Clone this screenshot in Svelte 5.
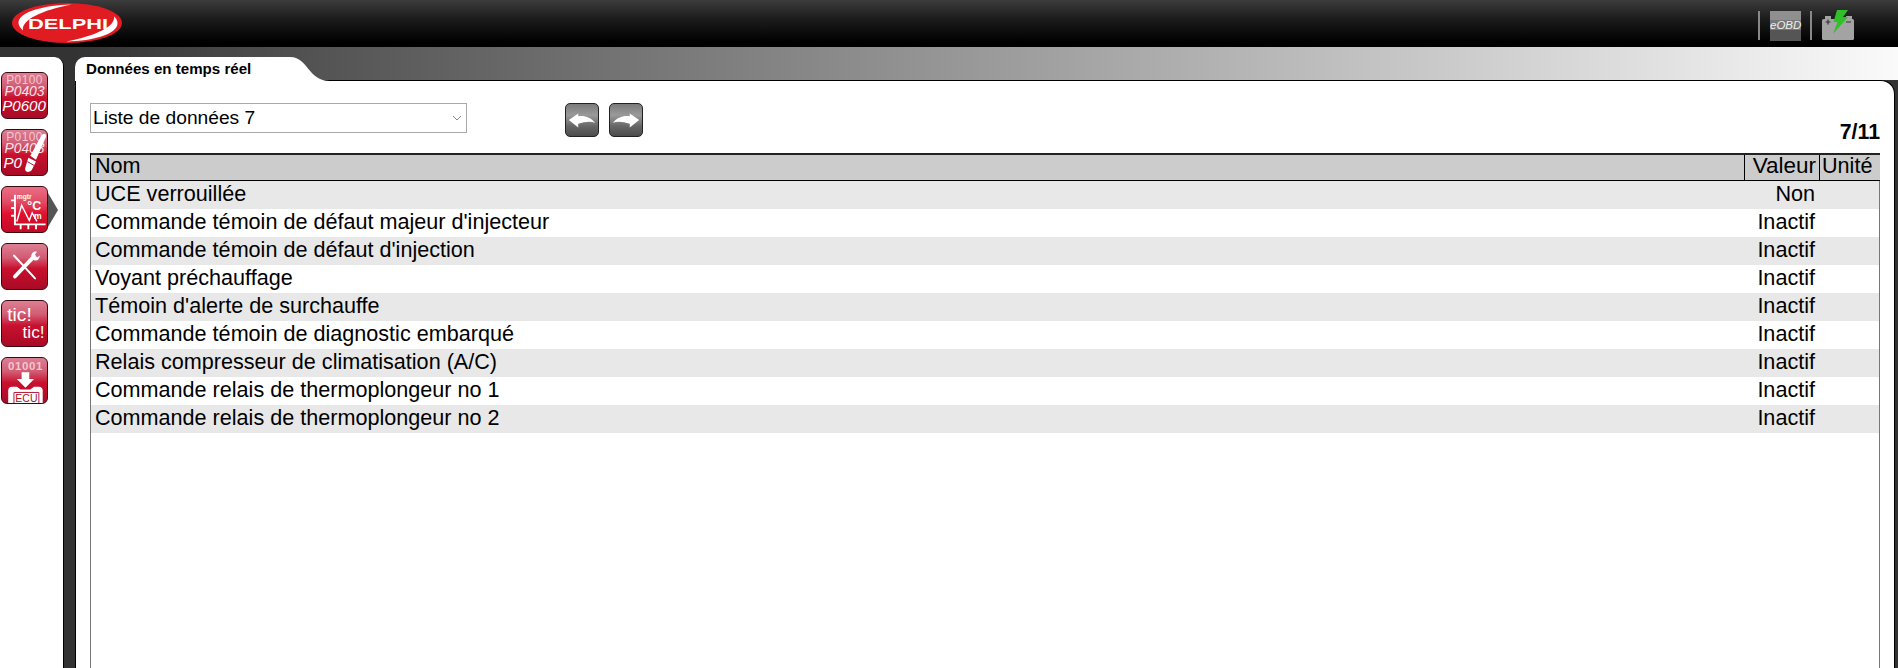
<script>
  const rows = [
    ["UCE verrouillée", "Non"],
    ["Commande témoin de défaut majeur d'injecteur", "Inactif"],
    ["Commande témoin de défaut d'injection", "Inactif"],
    ["Voyant préchauffage", "Inactif"],
    ["Témoin d'alerte de surchauffe", "Inactif"],
    ["Commande témoin de diagnostic embarqué", "Inactif"],
    ["Relais compresseur de climatisation (A/C)", "Inactif"],
    ["Commande relais de thermoplongeur no 1", "Inactif"],
    ["Commande relais de thermoplongeur no 2", "Inactif"]
  ];
</script>

<div class="page">
  <header class="topbar">
    <svg class="logo" viewBox="0 0 110 40" width="110" height="40">
      <ellipse cx="55" cy="20" rx="55" ry="20" fill="#e01b22" />
      <path d="M60 1.500C32 2 7 9 6.500 19.500C6.500 22 8 25 11 27.500C9 17 30 7 60 1.500Z" fill="#fff" />
      <path d="M54 38.500C82 38 105 31 105.500 20.500C105.500 17.500 104 15 102 13.500C104 23 84 33 54 38.500Z" fill="#fff" />
      <text x="56" y="26" text-anchor="middle" textLength="80" lengthAdjust="spacingAndGlyphs" class="logotext">DELPHI</text>
    </svg>
    <div class="status">
      <span class="sep"></span>
      <span class="eobd">eOBD</span>
      <span class="sep"></span>
      <svg class="battery" viewBox="0 0 33 30" width="33" height="30">
        <rect x="0" y="9" width="32" height="21" rx="1.500" fill="#a3a3a3" />
        <rect x="3" y="6" width="6" height="3" fill="#a3a3a3" />
        <rect x="24" y="6" width="6" height="3" fill="#a3a3a3" />
        <path d="M3.500 12H8.500M6 9.500V14.500M24 12H29" stroke="#333" stroke-width="1.200" />
        <path d="M15 0H26L21 7H26L11 24L15.500 12H11.500Z" fill="#2fc02a" />
      </svg>
    </div>
  </header>

  <div class="body">
    <nav class="sidebar">
      <button class="tool" aria-label="Codes défaut">
        <svg viewBox="0 0 46 47">
          <text x="23" y="11.500" class="c1">P0100</text>
          <text x="23" y="24.500" class="c2">P0403</text>
          <text x="22.500" y="40" class="c3">P0600</text>
        </svg>
      </button>
      <button class="tool" aria-label="Effacer les codes">
        <svg viewBox="0 0 46 47">
          <text x="23" y="11.500" class="c1">P0100</text>
          <text x="23" y="24.500" class="c2">P0403</text>
          <text x="1" y="40" class="c3 start">P0</text>
          <path d="M29 27L40 7C42 3 46 3 45.500 7L35 31Z" fill="#fff" />
          <path d="M27 29L35 33L31 41C29 45 22 45 24 39Z" fill="#fff" />
          <path d="M26 33L33 37" stroke="#b01030" stroke-width="1" />
        </svg>
      </button>
      <div class="current">
        <button class="tool strong" aria-label="Données en temps réel">
          <svg viewBox="0 0 46 47">
            <path d="M13 8V39H45M9 14H13M9 22H13M9 30H13M19 39V44M27 39V44M35 39V44" stroke="#fff" stroke-width="2" fill="none" />
            <path d="M15 36L20 19L28 35L31 27L36 36" stroke="#fff" stroke-width="1.500" fill="none" />
            <text x="26" y="24" class="deg">°C</text>
            <text x="33" y="33" class="deg small">m</text>
            <text x="15" y="13" class="deg tiny">mgtr</text>
          </svg>
        </button>
        <svg class="pointer" viewBox="0 0 10 34" width="10" height="34"><path d="M0 0L10 17L0 34Z" fill="#555" /></svg>
      </div>
      <button class="tool" aria-label="Outils">
        <svg viewBox="0 0 46 47">
          <path d="M12 12L34 36" stroke="#fff" stroke-width="2" stroke-linecap="round" />
          <path d="M32 14L13 34" stroke="#fff" stroke-width="4" stroke-linecap="round" />
          <path d="M30 13C30 9 33 7 36 8L34 11L36 14L39 12C39 16 36 18 33 17Z" fill="#fff" />
        </svg>
      </button>
      <button class="tool" aria-label="Tic tic">
        <svg viewBox="0 0 46 47">
          <text x="5" y="21" class="tic">tic!</text>
          <text x="44" y="39" class="tic end">tic!</text>
        </svg>
      </button>
      <button class="tool" aria-label="Flash ECU">
        <svg viewBox="0 0 46 47">
          <text x="24" y="13" class="bits">01001</text>
          <path d="M20 15H28V22H33L24 31L15 22H20Z" fill="#fff" />
          <path d="M6 47V34Q6 30 10 30H15L19 33H29L33 30H38Q42 30 42 34V47Z" fill="#fff" />
          <path d="M12 36V47M38 36V47M12 36H38" stroke="#b3102c" stroke-width="1" fill="none" />
          <text x="25" y="45.500" class="ecu">ECU</text>
        </svg>
      </button>
    </nav>

    <main class="content">
      <div class="tabstrip">
        <div class="tab">Données en temps réel</div>
        <svg class="tabcurve" viewBox="0 0 40 23" width="40" height="24" preserveAspectRatio="none">
          <path d="M0 0C18 0 18 23 40 23H0Z" fill="#fff" />
        </svg>
      </div>
      <section class="panel">
        <div class="toolbar">
          <div class="selectbox">
            <span>Liste de données 7</span>
            <svg viewBox="0 0 10 6" width="10" height="6"><path d="M1 1L5 5L9 1" fill="none" stroke="#888" stroke-width="1" /></svg>
          </div>
          <div class="navs">
            <button class="nav" aria-label="Précédent">
              <svg viewBox="0 0 34 34"><path d="M3 17L13 10V13C20 12 26 14 31 20C25 18 20 19 13 21V25Z" fill="#fff" /></svg>
            </button>
            <button class="nav" aria-label="Suivant">
              <svg viewBox="0 0 34 34"><path d="M31 17L21 10V13C14 12 8 14 3 20C9 18 14 19 21 21V25Z" fill="#fff" /></svg>
            </button>
          </div>
          <div class="count">7/11</div>
        </div>
        <div class="table">
          <div class="row head">
            <span class="name">Nom</span>
            <span class="value">Valeur</span>
            <span class="unit">Unité</span>
          </div>
          {#each rows as r}
            <div class="row">
              <span class="name">{r[0]}</span>
              <span class="value">{r[1]}</span>
              <span class="unit"></span>
            </div>
          {/each}
        </div>
      </section>
    </main>
  </div>
</div>

<style>
  :global(body) { margin: 0; background: #333; }
  .page {
    width: 1898px; height: 668px; overflow: hidden;
    font-family: "Liberation Sans", Arial, sans-serif; color: #000;
    display: flex; flex-direction: column;
  }
  .topbar {
    height: 47px; flex: none; box-sizing: border-box; padding: 3px 0 0 12px;
    background: linear-gradient(#3c3c3c, #1c1c1c 40%, #000 90%);
    display: flex; justify-content: space-between;
  }
  .logo { display: block; }
  .logotext { font: bold 15.500px "Liberation Sans", sans-serif; fill: #fff; }
  .status { display: flex; align-items: flex-start; padding: 5px 43px 0 0; }
  .sep { width: 2px; height: 29px; background: #888; margin-top: 3px; }
  .eobd {
    width: 31px; height: 30px; margin: 3px 9px 0 10px; box-sizing: border-box;
    background: linear-gradient(#8f8f8f 0 30%, #777 30% 62%, #555 62%);
    color: #eee; font: italic 11.500px/29px "Liberation Sans", sans-serif; text-align: center;
  }
  .battery { margin: 2px 0 0 10px; display: block; }

  .body { flex: 1; display: flex; min-height: 0; background: #333; }
  .sidebar {
    width: 64px; flex: none; box-sizing: border-box; margin-top: 10px;
    background: #fff; border-right: 1px solid #000; border-top-right-radius: 9px;
    padding: 15px 0 0 1px; display: flex; flex-direction: column; gap: 10px;
  }
  .current { display: flex; align-items: center; }
  .pointer { display: block; }
  .tool {
    width: 47px; height: 47px; padding: 0; flex: none; box-sizing: border-box;
    border: 1px solid #3a0a12; border-radius: 6px;
    background: linear-gradient(#dc8094, #d25c73 30%, #c8102e 55%, #a90a26);
  }
  .strong { background: linear-gradient(#ea6f86, #e04a62 35%, #e0102e 60%, #c40a26); }
  .tool svg { display: block; width: 45px; height: 45px; }
  svg text { font-family: "Liberation Sans", sans-serif; }
  .c1, .c2, .c3 { text-anchor: middle; }
  .c1 { font-size: 12.500px; fill: #f3c6d0; letter-spacing: .4px; }
  .c2 { font-size: 14.500px; font-style: italic; fill: #fbe3e8; }
  .c3 { font-size: 15.800px; font-style: italic; fill: #fff; }
  .c3.start { text-anchor: start; }
  .deg { font-size: 13px; font-weight: bold; fill: #fff; }
  .small { font-size: 9px; }
  .tiny { font-size: 7px; }
  .tic { font-size: 20px; fill: #fff; }
  .end { text-anchor: end; font-size: 18px; }
  .bits { font-size: 12px; font-weight: bold; fill: #f3c6d0; text-anchor: middle; letter-spacing: .6px; }
  .ecu { font-size: 11px; fill: #a80f2a; text-anchor: middle; }

  .content { flex: 1; margin-left: 11px; min-width: 0; display: flex; flex-direction: column; margin-right: 3px; }
  .tabstrip {
    height: 33px; flex: none; box-sizing: border-box; padding-top: 10px; display: flex;
    background: linear-gradient(90deg, #333 0, #555 14%, #fafafa 100%);
    margin-right: -3px; position: relative; z-index: 1;
  }
  .tab {
    width: 215px; height: 24px; flex: none; box-sizing: border-box; background: #fff;
    border-top-left-radius: 10px; padding: 3px 0 0 11px;
    font-size: 15.100px; font-weight: bold; line-height: 17px; white-space: nowrap;
  }
  .tabcurve { display: block; }
  .panel {
    flex: 1; background: #fff; border: 1px solid #000; border-bottom: 0;
    border-top-right-radius: 14px; box-sizing: border-box; min-height: 0;
    padding: 22px 14px 0 14px; position: relative; z-index: 0;
  }
  .toolbar { display: flex; align-items: flex-start; height: 50px; }
  .selectbox {
    width: 377px; height: 30px; box-sizing: border-box; border: 1px solid #a9a9a9; background: #fff;
    display: flex; align-items: center; justify-content: space-between;
    padding: 0 4px 0 2px; font-size: 19.200px;
  }
  .navs { display: flex; gap: 10px; margin-left: 98px; }
  .nav {
    width: 34px; height: 34px; padding: 0; border: 1px solid #222; border-radius: 5px;
    background: linear-gradient(#7a7a7a, #9a9a9a 35%, #666 70%, #4c4c4c);
  }
  .nav svg { display: block; width: 32px; height: 32px; }
  .count { margin-left: auto; font-size: 21.300px; font-weight: bold; padding-top: 17px; line-height: 24px; }
  .table {
    height: 560px; box-sizing: border-box; border: 1px solid #777; border-top: 0; border-bottom: 0;
    font-size: 21.600px; line-height: 26px;
  }
  .row { display: grid; grid-template-columns: 1fr 75px 61px; height: 28px; background: #fff; }
  .row:nth-child(even) { background: #e8e8e8; }
  .row span { white-space: nowrap; }
  .name { padding-left: 4px; }
  .value { text-align: right; padding-right: 3px; }
  .unit { text-align: left; padding-left: 2px; }
  .head {
    background: #ccc; border-top: 2px solid #222; border-bottom: 1px solid #000;
    height: 28px; line-height: 21px; box-sizing: border-box; border-left: 1px solid #000;
    margin-left: -1px; margin-right: -1px;
  }
  .head .value, .head .unit { border-left: 1px solid #000; }
  .head .value { font-size: 22.500px; padding-right: 3px; }
</style>
